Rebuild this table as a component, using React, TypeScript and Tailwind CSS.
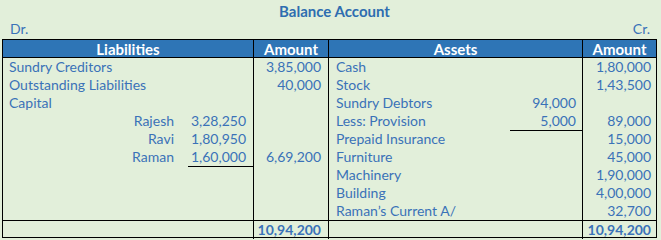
import React from 'react';

type Row = {
  left?: string;
  sub?: { name: string; amt: string; line?: boolean };
  leftAmt?: string;
  right?: string;
  rightSub?: { amt: string; line?: boolean };
  rightAmt?: string;
};

const rows: Row[] = [
  { left: 'Sundry Creditors', leftAmt: '3,85,000', right: 'Cash', rightAmt: '1,80,000' },
  { left: 'Outstanding Liabilities', leftAmt: '40,000', right: 'Stock', rightAmt: '1,43,500' },
  { left: 'Capital', right: 'Sundry Debtors', rightSub: { amt: '94,000' } },
  { sub: { name: 'Rajesh', amt: '3,28,250' }, right: 'Less: Provision', rightSub: { amt: '5,000', line: true }, rightAmt: '89,000' },
  { sub: { name: 'Ravi', amt: '1,80,950' }, right: 'Prepaid Insurance', rightAmt: '15,000' },
  { sub: { name: 'Raman', amt: '1,60,000', line: true }, leftAmt: '6,69,200', right: 'Furniture', rightAmt: '45,000' },
  { right: 'Machinery', rightAmt: '1,90,000' },
  { right: 'Building', rightAmt: '4,00,000' },
  { right: 'Raman\u2019s Current A/', rightAmt: '32,700' },
];

export default function App() {
  return (
    <div
      className="h-[240px] w-[661px] bg-[#e2efda] text-[14px] leading-[18px] text-[#3a72b8]"
      style={{ fontFamily: 'Lato, "Open Sans", sans-serif' }}
    >
      <div className="pt-[2px] text-center text-[15px] font-bold text-[#2e6db0]">
        <span className="ml-[8px]">Balance Account</span>
      </div>
      <div className="flex justify-between px-[10px]">
        <span>Dr.</span>
        <span className="pr-[1px]">Cr.</span>
      </div>

      <div className="ml-[2px] mt-[1px] w-[655px] border border-black">
        {/* header */}
        <div className="grid h-[18px] grid-cols-[251px_75px_254px_73px] border-b border-black bg-[#2e75b6] text-[15px] font-bold text-white">
          <div className="border-r border-black text-center">Liabilities</div>
          <div className="border-r border-black text-center">Amount</div>
          <div className="border-r border-black text-center">Assets</div>
          <div className="text-center">Amount</div>
        </div>

        {/* body */}
        {rows.map((r, i) => (
          <div key={i} className="grid h-[18px] grid-cols-[251px_75px_254px_73px]">
            <div className="flex border-r border-black">
              {r.left && <span className="pl-[6px]">{r.left}</span>}
              {r.sub && (
                <div className="flex w-full justify-end">
                  <span className="pr-[14px]">{r.sub.name}</span>
                  <span
                    className={`w-[65px] pr-[7px] text-right ${r.sub.line ? 'border-b border-black' : ''}`}
                  >
                    {r.sub.amt}
                  </span>
                </div>
              )}
            </div>
            <div className="border-r border-black pr-[7px] text-right">{r.leftAmt}</div>
            <div className="flex justify-between border-r border-black">
              <span className="pl-[7px]">{r.right}</span>
              {r.rightSub && (
                <span
                  className={`w-[72px] pr-[6px] text-right ${r.rightSub.line ? 'border-b border-black' : ''}`}
                >
                  {r.rightSub.amt}
                </span>
              )}
            </div>
            <div className="pr-[5px] text-right">{r.rightAmt}</div>
          </div>
        ))}

        {/* total */}
        <div className="grid h-[17px] grid-cols-[251px_75px_254px_73px] border-t border-black font-bold">
          <div className="border-r border-black" />
          <div className="border-r border-black pr-[7px] text-right">10,94,200</div>
          <div className="border-r border-black" />
          <div className="pr-[5px] text-right">10,94,200</div>
        </div>
      </div>
    </div>
  );
}
